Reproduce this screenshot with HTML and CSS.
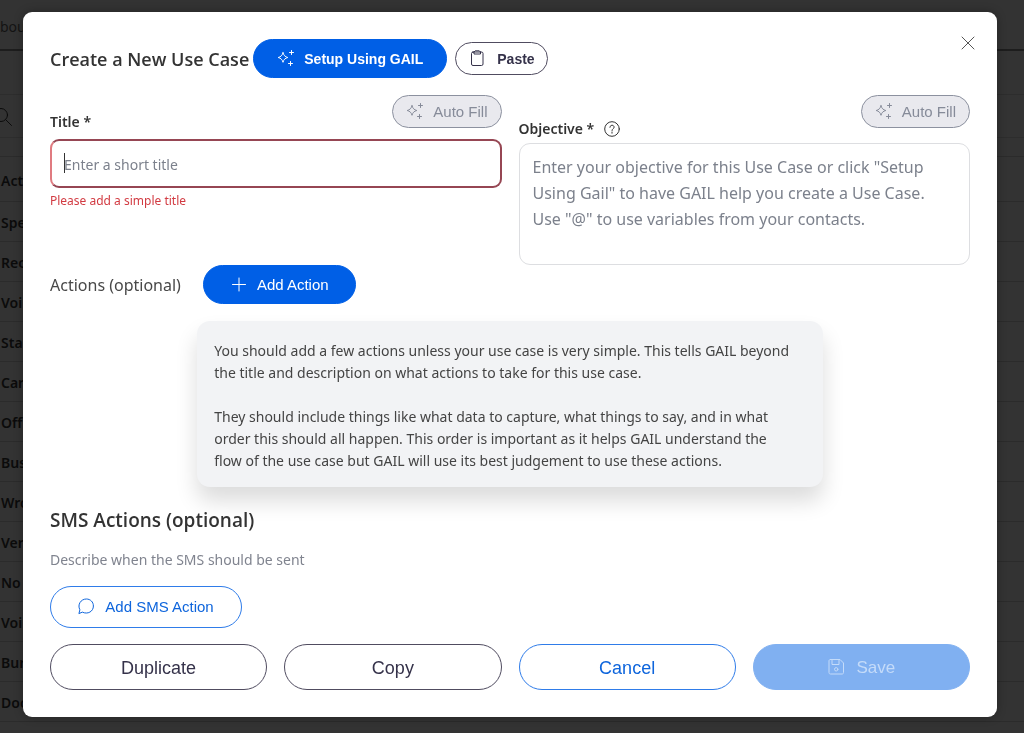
FILE: index.html
```html
<!DOCTYPE html>
<html lang="en">
<head>
<meta charset="utf-8">
<meta name="viewport" content="width=device-width, initial-scale=1">
<title>Create a New Use Case</title>
<link rel="stylesheet" href="styles.css">
</head>
<body>
<svg class="sprite" aria-hidden="true">
  <symbol id="sparkles" viewBox="0 0 18 18">
    <path d="M6 2.700C6.600 5.300 8.200 6.900 10.800 7.500C8.200 8.100 6.600 9.700 6 12.300C5.400 9.700 3.800 8.100 1.200 7.500C3.800 6.900 5.400 5.300 6 2.700Z"/>
    <path d="M14.500 .5V4.500M12.500 2.500H16.500M13.500 11.500V15.500M11.500 13.500H15.500"/>
  </symbol>
</svg>
<div class="page" aria-hidden="true">
  <div class="page-tabs">bou</div>
  <div class="page-gap"></div>
  <div class="page-search">
    <svg class="page-search-icon" viewBox="0 0 20 20"><circle cx="8" cy="8" r="6.500"/><path d="M12.800 12.800L18.500 18.500"/></svg>
  </div>
  <div class="page-strip"></div>
  <ul class="page-rows">
    <li class="page-head">Act</li><li>Spe</li><li>Rec</li><li>Voi</li><li>Sta</li><li>Car</li><li>Off</li><li>Bus</li><li>Wro</li><li>Ver</li><li>No</li><li>Voi</li><li>Bur</li><li>Doc</li>
  </ul>
</div>
<div class="overlay">
  <form class="dialog" role="dialog" aria-labelledby="dialog-title">
    <header class="dialog-header">
      <h1 class="dialog-title" id="dialog-title">Create a New Use Case</h1>
      <div class="header-buttons">
        <button type="button" class="btn btn-primary btn-setup"><svg class="icon"><use href="#sparkles"/></svg>Setup Using GAIL</button>
        <button type="button" class="btn btn-paste"><svg class="icon" viewBox="0 0 18 18"><rect x="1.500" y="2" width="11.500" height="13.500" rx="1.500"/><path d="M4 2V4H10.500V2M4 2L5.200 .8H9.300L10.500 2"/></svg>Paste</button>
      </div>
      <button type="button" class="close" aria-label="Close"><svg viewBox="0 0 14 14"><path d="M1 1L13 13M13 1L1 13"/></svg></button>
    </header>

    <div class="fields">
      <div class="field field-title">
        <div class="field-top">
          <label for="title">Title *</label>
          <button type="button" class="btn btn-fill" disabled><svg class="icon"><use href="#sparkles"/></svg>Auto Fill</button>
        </div>
        <div class="input-wrap">
          <input id="title" type="text" placeholder="Enter a short title" aria-invalid="true" aria-describedby="title-error">
          <span class="caret"></span>
        </div>
        <p class="error" id="title-error">Please add a simple title</p>
      </div>
      <div class="field field-objective">
        <div class="field-top">
          <div class="label-group">
            <label for="objective">Objective *</label>
            <svg class="help" viewBox="0 0 16 16"><circle cx="8" cy="8" r="7.300"/><path d="M5.900 6.300C5.900 3.500 10.100 3.500 10.100 6.200C10.100 7.700 8 7.700 8 9.500M8 11V12.200"/></svg>
          </div>
          <button type="button" class="btn btn-fill" disabled><svg class="icon"><use href="#sparkles"/></svg>Auto Fill</button>
        </div>
        <textarea id="objective" placeholder="Enter your objective for this Use Case or click &quot;Setup Using Gail&quot; to have GAIL help you create a Use Case. Use &quot;@&quot; to use variables from your contacts."></textarea>
      </div>
    </div>

    <div class="actions">
      <span class="actions-label">Actions (optional)</span>
      <button type="button" class="btn btn-primary btn-add"><svg class="icon" viewBox="0 0 18 18"><path d="M9 2V15M2.500 8.500H15.500"/></svg>Add Action</button>
    </div>

    <div class="info">
      <p>You should add a few actions unless your use case is very simple. This tells GAIL beyond the title and description on what actions to take for this use case.</p>
      <p>They should include things like what data to capture, what things to say, and in what order this should all happen. This order is important as it helps GAIL understand the flow of the use case but GAIL will use its best judgement to use these actions.</p>
    </div>

    <h2 class="sms-title">SMS Actions (optional)</h2>
    <p class="sms-text">Describe when the SMS should be sent</p>
    <button type="button" class="btn btn-outline btn-sms"><svg class="icon" viewBox="0 0 18 18"><path d="M1 15.200L1.900 11.800C-.8 6.800 2.700 1 8.400 1C12.400 1 15.400 4 15.400 8C15.400 13.500 9.700 16.700 4.700 14.300Z"/></svg>Add SMS Action</button>

    <footer class="footer">
      <button type="button" class="btn btn-big">Duplicate</button>
      <button type="button" class="btn btn-big">Copy</button>
      <button type="button" class="btn btn-big btn-outline">Cancel</button>
      <button type="submit" class="btn btn-big btn-save" disabled><svg class="icon" viewBox="0 0 18 18"><path d="M2.500 .5H12L15.500 4V13.500C15.500 14.500 15 15 14 15H2.500C1.500 15 1 14.500 1 13.500V2C1 1 1.500 .5 2.500 .5ZM4 .5V5.500H11V.5"/><circle cx="8.200" cy="10.300" r="1.700"/></svg>Save</button>
    </footer>
  </form>
</div>
</body>
</html>
```
FILE: styles.css
```css
* { box-sizing: border-box; }
body {
  margin: 0;
  min-height: 100vh;
  overflow: hidden;
  background: #333;
  color: #333;
  font-family: "Noto Sans", "Open Sans", sans-serif;
  font-size: 14px;
}
h1, h2, p, ul { margin: 0; padding: 0; }
svg { fill: none; stroke: currentColor; stroke-width: 1; stroke-linecap: round; stroke-linejoin: round; }
.sprite { position: absolute; width: 0; height: 0; }

.page { color: #0b0b0b; }
.page-tabs { height: 51px; padding-top: 15px; border-bottom: 2px solid #1d1d1d; line-height: 24px; color: #131313; }
.page-gap { height: 44px; border-bottom: 1px solid #2d2d2d; }
.page-search { height: 43px; padding-top: 12px; border-bottom: 1px solid #2d2d2d; }
.page-search-icon { display: block; width: 20px; height: 20px; margin-left: -7px; }
.page-strip { height: 19px; border-bottom: 1px solid #2b2b2b; }
.page-rows { list-style: none; font-weight: 600; }
.page-rows li { height: 40px; padding-left: 1px; border-bottom: 1px solid #2b2b2b; line-height: 41px; }
.page-rows .page-head { height: 45px; line-height: 48px; }

.overlay { position: fixed; inset: 0; padding: 12px 27px 16px 23px; overflow: auto; }
.dialog {
  padding: 27px;
  border-radius: 9px;
  background: #fff;
  box-shadow: 0 0 10px rgba(0, 0, 0, .3);
}
.dialog-header { display: flex; align-items: center; gap: 4px; height: 39px; }
.header-buttons { display: flex; align-items: center; gap: 8px; }
.dialog-title { font-family: "Open Sans", "Noto Sans", sans-serif; font-size: 18px; font-weight: 600; line-height: 28px; white-space: nowrap; }
.close {
  align-self: flex-start;
  width: 14px;
  height: 14px;
  margin: -3px -5px 0 auto;
  padding: 0;
  border: 0;
  background: none;
  color: #555;
}
.close svg { display: block; width: 14px; height: 14px; }

.btn {
  display: inline-flex;
  align-items: center;
  justify-content: center;
  gap: 9px;
  padding: 0;
  border: 1px solid #504c60;
  border-radius: 24px;
  background: #fff;
  color: #35324a;
  font-family: "Liberation Sans", Arial, sans-serif;
  font-size: 15px;
  line-height: 20px;
  white-space: nowrap;
}
.icon { flex: none; width: 18px; height: 18px; }
.btn-primary { height: 39px; border-color: #005fe6; background: #005fe6; color: #fff; }
.btn-setup { padding: 0 23px; font-weight: 700; font-size: 14px; }
.btn-paste { height: 33px; padding: 0 12px 0 14px; font-weight: 700; font-size: 14px; }
.btn-outline, .btn-big.btn-outline { border-color: #2f7ce9; color: #0e65dc; }

.fields { display: grid; grid-template-columns: 1fr 1fr; gap: 17px; margin-top: 17px; }
.field-top { display: flex; justify-content: space-between; align-items: flex-end; }
.field-top label { font-weight: 600; line-height: 24px; }
.btn-fill { height: 33px; padding: 0 13px; border-color: #8c919f; background: #e9e9ee; color: #868b99; }
.field-title .btn-fill { margin-bottom: 11px; }
.field-title label { margin-bottom: 5px; }
.field-objective .btn-fill { margin-bottom: 15px; }
.label-group { display: flex; align-items: center; gap: 10px; margin-bottom: 2px; }
.help { width: 16px; height: 16px; }
.input-wrap { position: relative; }
.caret { position: absolute; top: 14px; left: 14px; width: 1px; height: 20px; background: #333; }
input, textarea {
  display: block;
  width: 100%;
  border-radius: 9px;
  background: #fff;
  font-family: inherit;
  font-size: 14px;
}
input { height: 49px; padding: 2px 12px 0; border: 2px solid #964653; border-left-color: #e07b80; }
textarea { height: 122px; padding: 10px 13px; border: 1px solid #dddee1; border-radius: 11px; resize: none; font-size: 16px; line-height: 26px; }
input::placeholder, textarea::placeholder { color: #7c818c; opacity: 1; }
.error { margin-top: 3px; color: #d23b42; font-size: 12px; line-height: 20px; }

.actions { display: flex; align-items: center; gap: 22px; }
.actions-label { font-size: 16px; color: #484848; }
.btn-add { padding: 0 26px; }

.info {
  width: 68%;
  margin: 17px auto 0;
  padding: 19px 30px 15px 17px;
  border-radius: 13px;
  background: #f2f3f5;
  box-shadow: 0 14px 22px rgba(0, 0, 0, .14);
  color: #444;
  line-height: 22px;
}
.info p + p { margin-top: 22px; }

.sms-title { margin-top: 19px; font-family: "Open Sans", "Noto Sans", sans-serif; font-size: 19px; font-weight: 600; line-height: 28px; }
.sms-text { margin-top: 15px; color: #80848f; line-height: 22px; }
.btn-sms { display: flex; width: 192px; height: 42px; margin-top: 15px; }
.footer { display: grid; grid-template-columns: repeat(4, 1fr); gap: 17px; margin-top: 16px; }
.btn-big { height: 46px; padding-top: 2px; font-size: 18px; }
.btn-save { gap: 11px; border-color: #80b0f1; background: #80b0f1; color: #c4dbf9; font-size: 17px; }
```
